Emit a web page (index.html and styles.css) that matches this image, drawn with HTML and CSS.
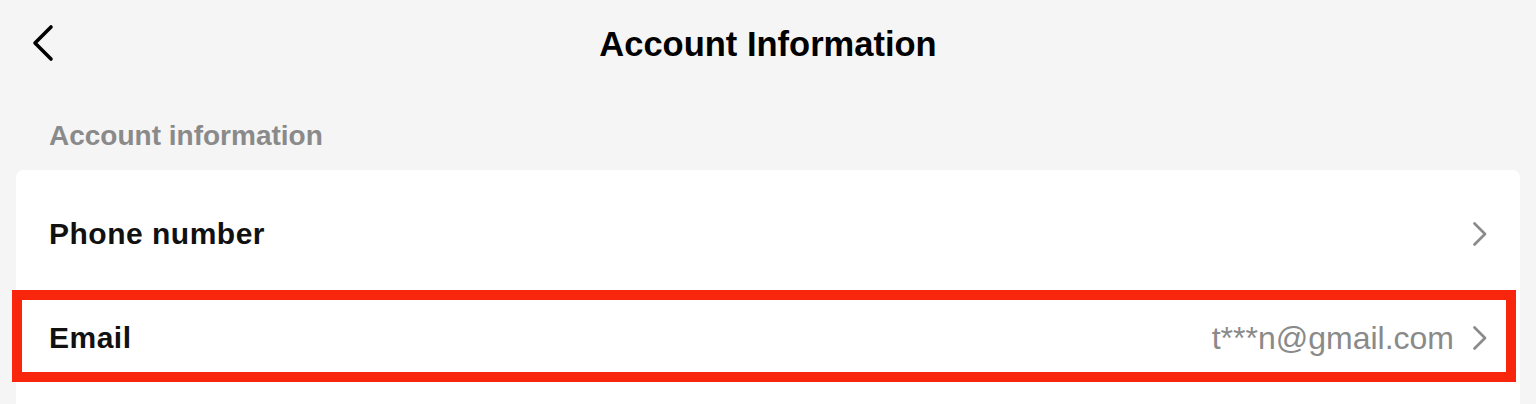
FILE: index.html
```html
<!DOCTYPE html>
<html lang="en">
<head>
<meta charset="utf-8">
<title>Account Information</title>
<link rel="stylesheet" href="styles.css">
</head>
<body>
<div class="page">
  <header class="topbar">
    <button class="back" aria-label="Back">
      <svg width="24" height="40" viewBox="0 0 24 40"><path d="M19 3 L3 19 L19 35" fill="none" stroke="#000" stroke-width="3.6" stroke-linecap="round" stroke-linejoin="round"/></svg>
    </button>
    <h1 class="title">Account Information</h1>
  </header>
  <div class="section-label">Account information</div>
  <div class="card">
    <div class="row">
      <span class="row-label">Phone number</span>
      <span class="row-end">
        <svg class="chev" width="16" height="26" viewBox="0 0 16 26"><path d="M2.5 2.5 L13 13 L2.5 23.5" fill="none" stroke="#8a8a8a" stroke-width="2.7" stroke-linecap="round" stroke-linejoin="round"/></svg>
      </span>
    </div>
    <div class="row">
      <span class="row-label">Email</span>
      <span class="row-end">
        <span class="row-value">t***n@gmail.com</span>
        <svg class="chev" width="16" height="26" viewBox="0 0 16 26"><path d="M2.5 2.5 L13 13 L2.5 23.5" fill="none" stroke="#8a8a8a" stroke-width="2.7" stroke-linecap="round" stroke-linejoin="round"/></svg>
      </span>
    </div>
  </div>
  <div class="highlight"></div>
</div>
</body>
</html>
```

FILE: styles.css
```css
html, body {
  margin: 0;
  padding: 0;
  background: #f5f5f5;
}
body {
  font-family: "Liberation Sans", Arial, sans-serif;
  color: #111;
  height: 404px;
  overflow: hidden;
}
.page {
  position: relative;
  height: 404px;
  overflow: hidden;
}
.topbar {
  position: relative;
  height: 88px;
  display: flex;
  align-items: center;
  justify-content: center;
}
.back {
  position: absolute;
  left: 32px;
  top: 24px;
  padding: 0;
  border: 0;
  background: none;
  display: flex;
}
.title {
  margin: 0;
  font-size: 34.5px;
  font-weight: 700;
  color: #000;
}
.section-label {
  height: 82px;
  box-sizing: border-box;
  padding: 30px 0 0 49px;
  font-size: 28px;
  font-weight: 700;
  color: #8a8a8a;
  line-height: 36px;
}
.card {
  margin: 0 16px;
  background: #fff;
  border-radius: 7px 7px 0 0;
  padding-top: 12px;
  height: 234px;
  box-sizing: border-box;
  overflow: hidden;
}
.row {
  height: 104px;
  display: flex;
  align-items: center;
  justify-content: space-between;
  padding: 0 32px 0 33px;
}
.row-label {
  font-size: 30px;
  font-weight: 700;
  color: #111;
  letter-spacing: 0.5px;
}
.row-end {
  display: flex;
  align-items: center;
  gap: 18px;
}
.row-value {
  font-size: 32px;
  color: #8a8a8a;
}
.chev {
  display: block;
}
.highlight {
  position: absolute;
  left: 12px;
  top: 290px;
  width: 1504px;
  height: 92px;
  box-sizing: border-box;
  border: 10px solid #f7260c;
}
```
